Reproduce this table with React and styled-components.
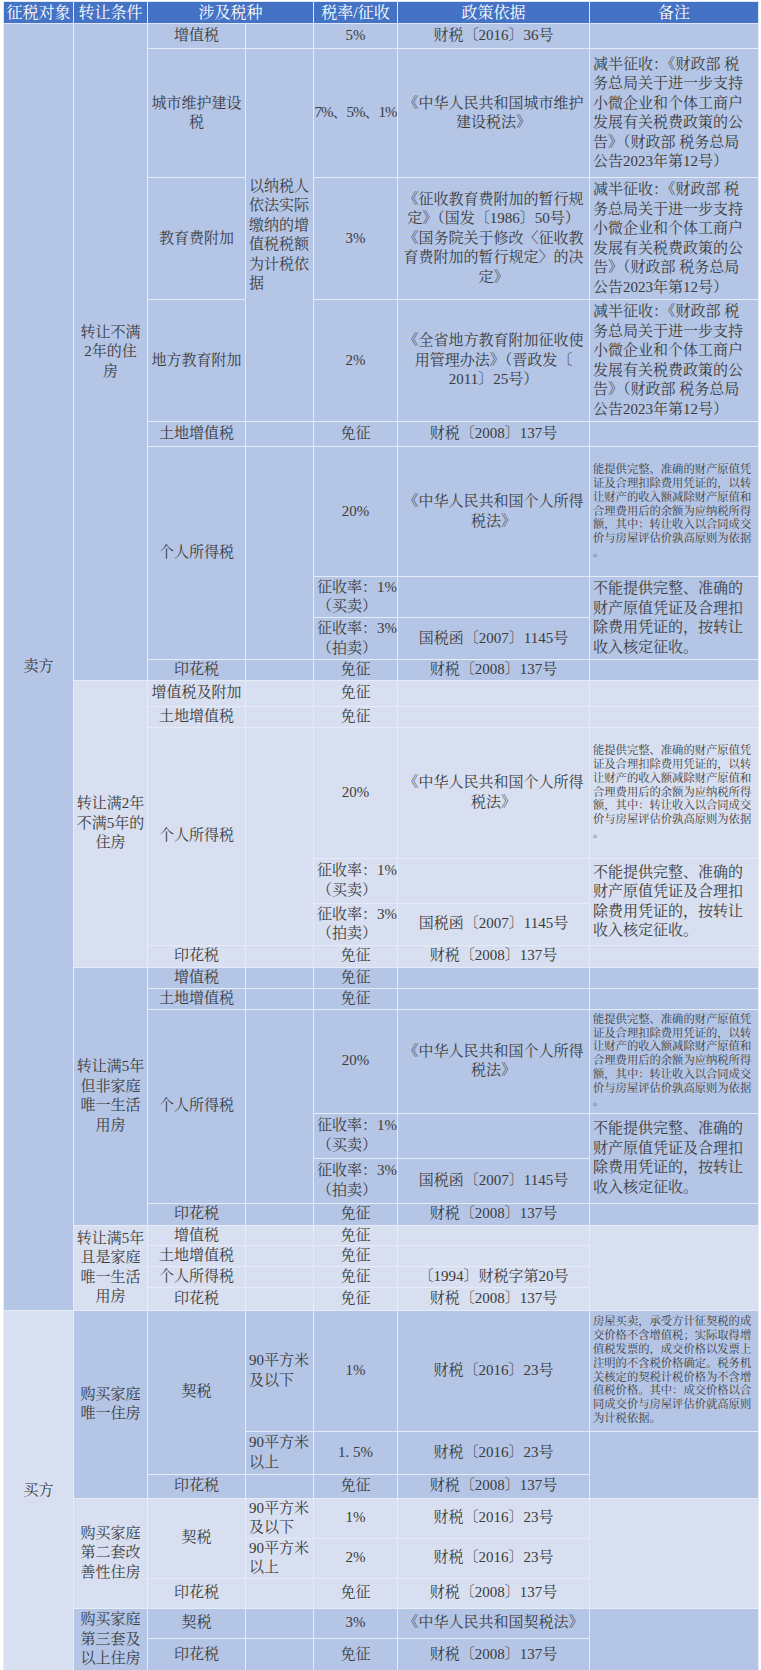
import React from 'react';
import styled, { createGlobalStyle } from 'styled-components';

const GlobalStyle = createGlobalStyle`
  body {
    margin: 0;
    background: #ffffff;
  }
`;

const Page = styled.div`
  padding: 1px 3px 4px 3px;
  font-family: "Liberation Serif", "Noto Serif CJK SC", "Noto Sans CJK SC", serif;
  color: #3b3b3b;
`;

const Table = styled.table`
  width: 755px;
  border-collapse: collapse;
  table-layout: fixed;
`;

const Col = styled.col`
  width: ${p => p.$w}px;
`;

const HeadCell = styled.th`
  background: #4472c4;
  color: #ffffff;
  font-weight: normal;
  font-size: 16px;
  line-height: 20px;
  height: 21px;
  padding: 0;
  border: 1px solid #dfe6f3;
  white-space: nowrap;
`;

const Row = styled.tr`
  height: ${p => p.$h}px;
`;

const tones = {
  dark: '#b4c5e6',
  light: '#d7dff0',
};

const Cell = styled.td`
  background: ${p => tones[p.$tone]};
  border: 1px solid #e6ecf7;
  padding: 0 ${p => (p.$tight ? 0 : p.$left ? 3 : 2)}px;
  font-size: ${p => (p.$small ? '11.3px' : '15px')};
  line-height: ${p => (p.$small ? '13.8px' : '19.5px')};
  letter-spacing: ${p => (p.$tight ? '-1px' : 'normal')};
  text-align: ${p => (p.$left ? 'left' : 'center')};
  vertical-align: middle;
  white-space: pre;
  overflow: hidden;
`;

const RateLine = styled.div`
  display: flex;
  justify-content: space-between;
`;

const D = 'dark';
const L = 'light';

const HALVE = '减半征收：《财政部 税\n务总局关于进一步支持\n小微企业和个体工商户\n发展有关税费政策的公\n告》（财政部 税务总局\n公告2023年第12号）';
const INCOME = '能提供完整、准确的财产原值凭\n证及合理扣除费用凭证的，以转\n让财产的收入额减除财产原值和\n合理费用后的余额为应纳税所得\n额，其中：转让收入以合同成交\n价与房屋评估价孰高原则为依据\n。';
const VERIFY = '不能提供完整、准确的\n财产原值凭证及合理扣\n除费用凭证的，按转让\n收入核定征收。';
const DEED = '房屋买卖，承受方计征契税的成\n交价格不含增值税；实际取得增\n值税发票的，成交价格以发票上\n注明的不含税价格确定。税务机\n关核定的契税计税价格为不含增\n值税价格。其中：成交价格以合\n同成交价与房屋评估价就高原则\n为计税依据。';
const IIT_LAW = '《中华人民共和国个人所得\n税法》';
const STAMP = '财税〔2008〕137号';
const DEED_DOC = '财税〔2016〕23号';
const AUCTION = '国税函〔2007〕1145号';

const rate = (v, kind) => ({ rate: [v, kind], left: true });

// 卖方 ─ 转让不满2年 / 满2年不满5年 / 满5年非唯一 的个人所得税段落结构相同
const incomeBlock = (h) => [
  { h: h[0], cells: [{ t: '个人所得税', rs: 3 }, { t: '', rs: 3 }, { t: '20%' }, { t: IIT_LAW }, { t: INCOME, left: true, small: true }] },
  { h: h[1], cells: [rate('1%', '（买卖）'), { t: '' }, { t: VERIFY, left: true, rs: 2 }] },
  { h: h[2], cells: [rate('3%', '（拍卖）'), { t: AUCTION }] },
];

const rows = [
  // 转让不满2年的住房
  { h: 25, tone: D, cells: [{ t: '卖方', rs: 25 }, { t: '转让不满\n2年的住\n房', rs: 9 }, { t: '增值税' }, { t: '' }, { t: '5%' }, { t: '财税〔2016〕36号' }, { t: '' }] },
  { h: 129, tone: D, cells: [{ t: '城市维护建设\n税' }, { t: '以纳税人\n依法实际\n缴纳的增\n值税税额\n为计税依\n据', rs: 3, left: true }, { t: '7%、5%、1%', tight: true }, { t: '《中华人民共和国城市维护\n建设税法》' }, { t: HALVE, left: true }] },
  { h: 122, tone: D, cells: [{ t: '教育费附加' }, { t: '3%' }, { t: '《征收教育费附加的暂行规\n定》（国发〔1986〕50号）\n《国务院关于修改〈征收教\n育费附加的暂行规定〉的决\n定》' }, { t: HALVE, left: true }] },
  { h: 122, tone: D, cells: [{ t: '地方教育附加' }, { t: '2%' }, { t: '《全省地方教育附加征收使\n用管理办法》（晋政发〔\n2011〕25号）' }, { t: HALVE, left: true }] },
  { h: 25, tone: D, cells: [{ t: '土地增值税' }, { t: '' }, { t: '免征' }, { t: STAMP }, { t: '' }] },
  ...incomeBlock([130, 41, 42]).map(r => ({ ...r, tone: D })),
  { h: 19, tone: D, cells: [{ t: '印花税' }, { t: '' }, { t: '免征' }, { t: STAMP }, { t: '' }] },

  // 转让满2年不满5年的住房
  { h: 26, tone: L, cells: [{ t: '转让满2年\n不满5年的\n住房', rs: 6 }, { t: '增值税及附加' }, { t: '' }, { t: '免征' }, { t: '' }, { t: '' }] },
  { h: 21, tone: L, cells: [{ t: '土地增值税' }, { t: '' }, { t: '免征' }, { t: '' }, { t: '' }] },
  ...incomeBlock([131, 45, 42]).map(r => ({ ...r, tone: L })),
  { h: 22, tone: L, cells: [{ t: '印花税' }, { t: '' }, { t: '免征' }, { t: STAMP }, { t: '' }] },

  // 转让满5年但非家庭唯一生活用房
  { h: 21, tone: D, cells: [{ t: '转让满5年\n但非家庭\n唯一生活\n用房', rs: 6 }, { t: '增值税' }, { t: '' }, { t: '免征' }, { t: '' }, { t: '' }] },
  { h: 21, tone: D, cells: [{ t: '土地增值税' }, { t: '' }, { t: '免征' }, { t: '' }, { t: '' }] },
  ...incomeBlock([104, 45, 45]).map(r => ({ ...r, tone: D })),
  { h: 22, tone: D, cells: [{ t: '印花税' }, { t: '' }, { t: '免征' }, { t: STAMP }, { t: '' }] },

  // 转让满5年且是家庭唯一生活用房
  { h: 20, tone: L, cells: [{ t: '转让满5年\n且是家庭\n唯一生活\n用房', rs: 4 }, { t: '增值税' }, { t: '' }, { t: '免征' }, { t: '' }, { t: '', rs: 4 }] },
  { h: 20, tone: L, cells: [{ t: '土地增值税' }, { t: '' }, { t: '免征' }, { t: '' }] },
  { h: 21, tone: L, cells: [{ t: '个人所得税' }, { t: '' }, { t: '免征' }, { t: '〔1994〕财税字第20号' }] },
  { h: 23, tone: L, cells: [{ t: '印花税' }, { t: '' }, { t: '免征' }, { t: STAMP }] },

  // 买方
  { h: 121, tone: D, cells: [{ t: '买方', rs: 8, tone: L }, { t: '购买家庭\n唯一住房', rs: 3 }, { t: '契税', rs: 2 }, { t: '90平方米\n及以下', left: true }, { t: '1%' }, { t: DEED_DOC }, { t: DEED, left: true, small: true }] },
  { h: 43, tone: D, cells: [{ t: '90平方米\n以上', left: true }, { t: '1. 5%' }, { t: DEED_DOC }, { t: '', rs: 2 }] },
  { h: 24, tone: D, cells: [{ t: '印花税' }, { t: '' }, { t: '免征' }, { t: STAMP }] },
  { h: 39, tone: L, cells: [{ t: '购买家庭\n第二套改\n善性住房', rs: 3 }, { t: '契税', rs: 2 }, { t: '90平方米\n及以下', left: true }, { t: '1%' }, { t: DEED_DOC }, { t: '', rs: 3 }] },
  { h: 40, tone: L, cells: [{ t: '90平方米\n以上', left: true }, { t: '2%' }, { t: DEED_DOC }] },
  { h: 30, tone: L, cells: [{ t: '印花税' }, { t: '' }, { t: '免征' }, { t: STAMP }] },
  { h: 30, tone: D, cells: [{ t: '购买家庭\n第三套及\n以上住房', rs: 2 }, { t: '契税' }, { t: '' }, { t: '3%' }, { t: '《中华人民共和国契税法》' }, { t: '', rs: 2 }] },
  { h: 33, tone: D, cells: [{ t: '印花税' }, { t: '' }, { t: '免征' }, { t: STAMP }] },
];

const widths = [70, 74, 98, 68, 84, 192, 169];

function renderCell(c, i, rowTone) {
  return (
    <Cell
      key={i}
      rowSpan={c.rs}
      $tone={c.tone || rowTone}
      $left={c.left}
      $small={c.small}
      $tight={c.tight}
    >
      {c.rate ? (
        <>
          <RateLine>
            <span>征收率：</span>
            <span>{c.rate[0]}</span>
          </RateLine>
          {c.rate[1]}
        </>
      ) : (
        c.t
      )}
    </Cell>
  );
}

export default function App() {
  return (
    <Page>
      <GlobalStyle />
      <Table>
        <colgroup>
          {widths.map((w, i) => (
            <Col key={i} $w={w} />
          ))}
        </colgroup>
        <thead>
          <tr>
            <HeadCell>征税对象</HeadCell>
            <HeadCell>转让条件</HeadCell>
            <HeadCell colSpan={2}>涉及税种</HeadCell>
            <HeadCell>税率/征收</HeadCell>
            <HeadCell>政策依据</HeadCell>
            <HeadCell>备注</HeadCell>
          </tr>
        </thead>
        <tbody>
          {rows.map((r, ri) => (
            <Row key={ri} $h={r.h}>
              {r.cells.map((c, ci) => renderCell(c, ci, r.tone))}
            </Row>
          ))}
        </tbody>
      </Table>
    </Page>
  );
}
